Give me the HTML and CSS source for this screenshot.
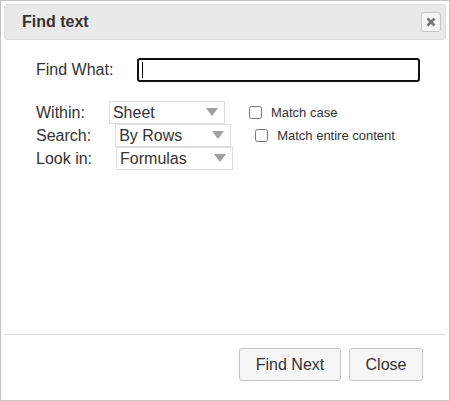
FILE: index.html
```html
<!DOCTYPE html>
<html>
<head>
<meta charset="utf-8">
<link rel="stylesheet" href="styles.css">
</head>
<body>
<div class="dialog">
  <div class="titlebar">
    <span class="title">Find text</span>
    <button class="close-x" aria-label="Close">
      <svg width="10" height="10" viewBox="0 0 10 10"><path d="M1.5 1.5 L8.5 8.5 M8.5 1.5 L1.5 8.5" stroke="#777" stroke-width="2.6" stroke-linecap="butt"/></svg>
    </button>
  </div>
  <div class="content">
    <div class="find-row">
      <span class="find-label">Find What:</span>
      <div class="text-input"><span class="caret"></span></div>
    </div>
    <div class="options">
      <div class="opt-row">
        <span class="opt-label">Within:</span>
        <div class="select"><span>Sheet</span><span class="arrow"></span></div>
        <label class="check"><input type="checkbox"><span>Match case</span></label>
      </div>
      <div class="opt-row">
        <span class="opt-label">Search:</span>
        <div class="select"><span>By Rows</span><span class="arrow"></span></div>
        <label class="check"><input type="checkbox"><span>Match entire content</span></label>
      </div>
      <div class="opt-row">
        <span class="opt-label">Look in:</span>
        <div class="select wide"><span>Formulas</span><span class="arrow"></span></div>
      </div>
    </div>
  </div>
  <div class="buttonpane">
    <button class="btn find-next">Find Next</button>
    <button class="btn close">Close</button>
  </div>
</div>
</body>
</html>
```
FILE: styles.css
```css
html, body {
  margin: 0;
  padding: 0;
  background: #fff;
}
body {
  font-family: "Liberation Sans", Arial, sans-serif;
  color: #333;
}
.dialog {
  width: 450px;
  height: 401px;
  box-sizing: border-box;
  border: 1px solid #c5c5c5;
  padding: 3px;
  display: flex;
  flex-direction: column;
  background: #fff;
}
.titlebar {
  height: 36px;
  box-sizing: border-box;
  border: 1px solid #dddddd;
  border-radius: 3px;
  background: #e9e9e9;
  display: flex;
  align-items: center;
  justify-content: space-between;
  padding-left: 17px;
  padding-right: 4px;
}
.title {
  font-weight: bold;
  font-size: 16px;
  color: #333;
}
.close-x {
  width: 20px;
  height: 20px;
  box-sizing: border-box;
  border: 1px solid #c5c5c5;
  border-radius: 3px;
  background: #f6f6f6;
  padding: 0;
  margin: 0;
  display: flex;
  align-items: center;
  justify-content: center;
}
.content {
  flex: 1;
  padding: 18px 0 0 32px;
}
.find-row {
  display: flex;
  align-items: center;
  height: 24px;
}
.find-label {
  width: 101px;
  font-size: 16px;
  color: #333;
}
.text-input {
  width: 283px;
  height: 24px;
  box-sizing: border-box;
  border: 2px solid #101010;
  border-radius: 3px;
  display: flex;
  align-items: center;
  padding-left: 3px;
}
.caret {
  display: block;
  width: 1px;
  height: 16px;
  background: #000;
}
.options {
  margin-top: 19px;
  display: flex;
  flex-direction: column;
}
.opt-row {
  display: flex;
  align-items: center;
  height: 23px;
  gap: 24px;
}
.opt-label {
  font-size: 16px;
  color: #333;
}
.select {
  width: 116px;
  height: 23px;
  box-sizing: border-box;
  border: 1px solid #dddddd;
  background: #fff;
  display: flex;
  align-items: center;
  justify-content: space-between;
  padding: 0 6px 0 3px;
  font-size: 16px;
  color: #333;
}
.select.wide {
  width: 117px;
}
.arrow {
  width: 0;
  height: 0;
  border-left: 6px solid transparent;
  border-right: 6px solid transparent;
  border-top: 8px solid #a0a0a0;
  margin-top: -2px;
}
.check {
  display: flex;
  align-items: center;
  font-size: 13px;
  color: #333;
}
.check input {
  margin: 0 9px 0 0;
  width: 13px;
  height: 13px;
}
.buttonpane {
  border-top: 1px solid #dddddd;
  padding: 13px 23px 16px 0;
  display: flex;
  justify-content: flex-end;
  gap: 8px;
}
.btn {
  height: 33px;
  box-sizing: border-box;
  border: 1px solid #c5c5c5;
  border-radius: 3px;
  background: #f6f6f6;
  color: #333;
  font-family: "Liberation Sans", Arial, sans-serif;
  font-size: 16px;
  padding: 0;
  margin: 0;
}
.find-next {
  width: 102px;
}
.close {
  width: 74px;
}
```
